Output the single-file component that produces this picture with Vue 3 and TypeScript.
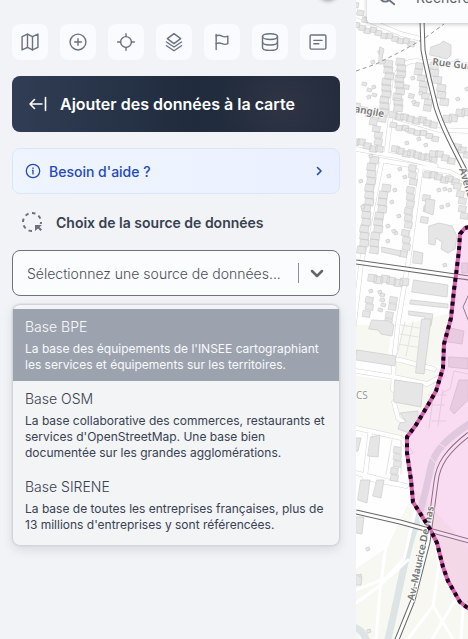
<script setup lang="ts">
import { ref } from 'vue'

interface Tool {
  label: string
  paths: string[]
}

interface Source {
  id: string
  name: string
  description: string
}

interface Row {
  from: [number, number]
  to: [number, number]
  size: number
  step: number
}

const tools: Tool[] = [
  { label: 'Carte', paths: ['M2.500 5.500 9 2.500l6 3 6.500-3v16l-6.500 3-6-3-6.500 3z', 'M9 2.500v16M15 5.500v16'] },
  { label: 'Ajouter', paths: ['M21.500 12a9.500 9.500 0 1 1-19 0 9.500 9.500 0 0 1 19 0z', 'M12 8v8M8 12h8'] },
  { label: 'Localiser', paths: ['M18.500 12a6.500 6.500 0 1 1-13 0 6.500 6.500 0 0 1 13 0z', 'M12 2v3.500M12 18.500V22M2 12h3.500M18.500 12H22'] },
  { label: 'Couches', paths: ['M12 2l8 6-8 6-8-6z', 'M3 12l9 6 9-6', 'M3 16.500l9 6 9-6'] },
  { label: 'Repères', paths: ['M5 21V3', 'M5 5c3-2 5-1 7 0s4 1.500 7 0v9c-3 1.500-5 1-7 0s-4-1.500-7 0'] },
  { label: 'Données', paths: ['M21 5.500c0 2-4 3.500-9 3.500S3 7.500 3 5.500 7 2 12 2s9 1.500 9 3.500z', 'M3 5.500v13C3 20.500 7 22 12 22s9-1.500 9-3.500v-13', 'M3 12c0 2 4 3.500 9 3.500s9-1.500 9-3.500'] },
  { label: 'Notes', paths: ['M4 3.500h16a1.500 1.500 0 0 1 1.500 1.500v14a1.500 1.500 0 0 1-1.500 1.500H4A1.500 1.500 0 0 1 2.500 19V5A1.500 1.500 0 0 1 4 3.500z', 'M7 10h10M7 14h6'] },
]

const sources: Source[] = [
  { id: 'bpe', name: 'Base BPE', description: "La base des équipements de l'INSEE cartographiant les services et équipements sur les territoires." },
  { id: 'osm', name: 'Base OSM', description: "La base collaborative des commerces, restaurants et services d'OpenStreetMap. Une base bien documentée sur les grandes agglomérations." },
  { id: 'sirene', name: 'Base SIRENE', description: 'La base de toutes les entreprises françaises, plus de 13 millions d\'entreprises y sont référencées.' },
]

const active = ref('bpe')
const query = ref('')
const search = ref('')

// Rows of houses that line the residential streets.
const rows: Row[] = [
  { from: [357, 26], to: [412, 44], size: 6, step: 6 },
  { from: [357, 5], to: [365, 20], size: 6, step: 7 },
  { from: [390, 64], to: [384, 112], size: 8, step: 6 },
  { from: [402, 62], to: [398, 108], size: 8, step: 6 },
  { from: [419, 66], to: [429, 108], size: 7, step: 6 },
  { from: [434, 66], to: [445, 102], size: 8, step: 7 },
  { from: [357, 107], to: [383, 119], size: 7, step: 7 },
  { from: [394, 115], to: [434, 124], size: 7, step: 6 },
  { from: [394, 125], to: [436, 138], size: 6, step: 6 },
  { from: [356, 141], to: [380, 150], size: 7, step: 6 },
  { from: [396, 150], to: [434, 159], size: 7, step: 6 },
  { from: [448, 119], to: [467, 112], size: 8, step: 7 },
  { from: [458, 146], to: [468, 155], size: 7, step: 7 },
  { from: [375, 122], to: [380, 142], size: 7, step: 6 },
  { from: [374, 160], to: [363, 250], size: 8, step: 7 },
  { from: [386, 188], to: [374, 250], size: 8, step: 7 },
  { from: [414, 168], to: [405, 254], size: 7, step: 7 },
  { from: [427, 198], to: [426, 220], size: 7, step: 12 },
  { from: [428, 174], to: [456, 182], size: 7, step: 6 },
  { from: [459, 186], to: [465, 216], size: 7, step: 7 },
  { from: [434, 153], to: [452, 160], size: 7, step: 7 },
  { from: [373, 278], to: [405, 283], size: 8, step: 7 },
  { from: [370, 300], to: [368, 314], size: 7, step: 7 },
  { from: [384, 295], to: [382, 310], size: 4, step: 6 },
  { from: [394, 300], to: [389, 322], size: 7, step: 7 },
  { from: [399, 450], to: [395, 478], size: 7, step: 7 },
  { from: [408, 87], to: [416, 104], size: 5, step: 8 },
  { from: [366, 84], to: [374, 95], size: 4, step: 7 },
]

function houses(row: Row): string {
  const dx = row.to[0] - row.from[0]
  const dy = row.to[1] - row.from[1]
  const length = Math.hypot(dx, dy)
  const count = Math.round(length / row.step)
  let path = ''
  for (let i = 0; i <= count; i++) {
    const wobble = ((i * 7 + row.from[0]) % 3) - 1
    const x = Math.round(row.from[0] + (dx * i) / count + (Math.abs(dy) > Math.abs(dx) ? wobble : 0))
    const y = Math.round(row.from[1] + (dy * i) / count + (Math.abs(dx) >= Math.abs(dy) ? wobble : 0))
    path += `M${x - row.size / 2} ${y - row.size / 2}l${row.size} 1l-1 ${row.size - 1}l-${row.size} -1z`
  }
  return path
}

// Garden sheds scattered inside the blocks.
const sheds: [number, number][] = [
  [372, 86], [378, 51], [371, 61], [411, 77], [419, 92], [412, 101], [387, 175], [393, 189],
  [398, 168], [397, 215], [390, 201], [386, 225], [394, 232], [403, 176], [437, 189], [443, 188],
  [448, 189], [440, 206], [446, 204], [369, 290], [378, 291], [405, 129], [417, 138], [424, 144],
  [405, 142], [369, 155], [361, 206], [359, 180], [456, 98], [465, 88], [455, 60], [367, 96],
  [366, 548], [358, 575], [367, 630], [443, 264], [392, 230], [386, 240],
]

const streets = 'M356 15l45 19 20 5M372 0l-3 20M386 155l9-72c1-14 7-21 20-22l53 4M388 115l51 15 29 1M356 149l40 7 40 10M382 160l-21 105-7 60M380 160l70 12 18 10M421 168l-13 95-10 60-4 37-1 30M358 353l42 7 34 9M356 371l38 6 33 7 15-8M394 402l4 16 9 7M356 428l45 10 9 14M370 434l-5 44 41 8M356 473l50 13'
const paths = 'M415 486l-29 60-6 44-4 49M356 590l30-12 18-19 13-55M356 603l22-16 30-27M434 530l5 34-6 42-25 33M454 602l-22 37M463 610l-2 29M433 606l20 33'
const roads = 'M422 20l1 30c4 22 9 40 13 57 7 22 18 42 34 73M356 262l50 7 63 9M356 512l44 10 69 19M469 434c-22 17-31 30-33 48l-8 60-15 58-17 42'
const zone = 'M469 227L465 228 460 234 459 250 456 275 454 290 451 318 444 344 443 368 436 391 428 405 416 425 407 437 407 453 411 480 413 502 430 529 437 543 443 567 448 581 460 602 469 609'
</script>

<template>
  <div class="app">
    <aside class="sidebar">
      <span class="collapse"></span>
      <nav class="tools" aria-label="Outils">
        <button v-for="tool in tools" :key="tool.label" class="tool" type="button" :aria-label="tool.label">
          <svg viewBox="0 0 24 24" aria-hidden="true">
            <path v-for="d in tool.paths" :key="d" :d="d" />
          </svg>
        </button>
      </nav>

      <button class="banner" type="button">
        <svg viewBox="0 0 20 20" aria-hidden="true"><path d="M14 10H2M6.500 5.500L2 10l4.500 4.500M17.500 3.500v13" /></svg>
        <span>Ajouter des données à la carte</span>
      </button>

      <button class="help" type="button">
        <svg viewBox="0 0 16 16" aria-hidden="true">
          <circle cx="8" cy="8" r="6.700" /><path d="M7.500 7.500H8V11M8 5v.5" />
        </svg>
        <span>Besoin d'aide ?</span>
        <svg class="chevron" viewBox="0 0 16 16" aria-hidden="true"><path d="M6.500 4.500L10 8l-3.500 3.500" /></svg>
      </button>

      <label class="heading" for="source">
        <svg viewBox="0 0 24 24" aria-hidden="true">
          <circle cx="12" cy="12" r="9" pathLength="80" stroke-dasharray="5 5" />
          <path class="patch" d="M14 14h9v9h-9z" />
          <path class="arrow" d="M15 15h7l-2.500 2 2.500 2.500-1.500 1.500-2.500-2.500-3 2.500z" />
        </svg>
        <span>Choix de la source de données</span>
      </label>

      <div class="combo">
        <div class="control">
          <input
            id="source"
            v-model="query"
            type="text"
            role="combobox"
            aria-expanded="true"
            aria-controls="sources"
            placeholder="Sélectionnez une source de données..."
          />
          <span class="divider"></span>
          <button class="toggle" type="button" aria-label="Ouvrir la liste">
            <svg viewBox="0 0 20 20" aria-hidden="true"><path d="M5 8l5 5 5-5" /></svg>
          </button>
        </div>
        <ul id="sources" class="menu" role="listbox">
          <li
            v-for="source in sources"
            :key="source.id"
            class="option"
            :class="{ active: source.id === active }"
            role="option"
            :aria-selected="source.id === active"
            @mouseenter="active = source.id"
          >
            <span class="name">{{ source.name }}</span>
            <span class="description">{{ source.description }}</span>
          </li>
        </ul>
      </div>
    </aside>

    <main class="map">
      <svg class="canvas" viewBox="356 0 112 639" preserveAspectRatio="xMinYMin slice" role="img" aria-label="Plan du quartier">
        <path class="ground" d="M356 0h112v639H356z" />
        <path class="park" d="M356 376l36 5 6-20 40 8 6-8v16l-28 48-12 14-48-9zM413 487l55 60v92H356v-70l32-22z" />
        <path class="park" d="M356 325h36l-4 30-32-5zM402 325l48-12-8 54-44-9z" />
        <g class="river">
          <path d="M469 424c-18 12-34 25-38 42-5 25-10 45-18 67-10 32-15 65-25 106" />
          <path d="M356 628c5 2 8 6 10 11" />
        </g>

        <path class="casing" :d="streets" />
        <path class="street" :d="streets" />
        <path class="footpath" :d="paths" />

        <g class="building">
          <path v-for="(row, i) in rows" :key="i" :d="houses(row)" />
          <path v-for="([x, y], i) in sheds" :key="`s${i}`" :d="`M${x} ${y}l3 -1 1 3 -3 1z`" />
          <path d="M431 47l9-3 3-3 8 4v10l-4 4-17-4zM380 47l4 2-2 10 4 2-2 3h-5zM429 226l10-3 13 3 5 10-2 13-7 4-7-4 1-7-6-4-1 7-6-1z" />
          <path d="M382 247l19 4-1 5-18-4zM414 251l9 2-1 11-9-1zM426 199l9 1-2 15-8-3zM414 280l34 5-1 12-35-5zM411 300l37 4v4l-38-4zM409 311l24 3-2 12-7-1 1-8-16-2z" />
          <path d="M372 320l17 1 5 4-2 11-11-2-3-4-9-1zM357 350l39 6-1 10-39-6zM422 319h9l-7 55-8-1zM395 380l28 4-2 23-27-5zM400 413l18-2v13l-6 10-14-5 2-6 6-1zM371 437l9-2-2 22-10-1zM356 438h5l-3 13h-2zM361 480h9l-3 23-9-3zM377 480h7l-3 18-8-2zM356 517h8l-2 17-6-1zM356 574l6 4-1 7h-5z" />
          <path d="M450 328l14 3-2 13-14-2zM449 357l19 1v11l-19-2zM468 380h-9l-9 29 4 5 14-14zM462 263h6v10h-6z" />
        </g>

        <path class="boundary" d="M356 71l20-7 24-12 25-14 19-14" />
        <path class="parcels" d="M428 395h18M426 405h18M432 421h14M443 390l-5 36M434 392l-5 36M401 440v34M392 440l-6 34M401 325l24 4M400 334l24 4M398 344l24 4M405 322l-8 33M413 322l-7 34M442 393l8-4 4-18 14 3" />
        <path class="trails" d="M415 495l10 50M468 490l-38 20M436 534l32-40M440 470l28 30M415 440l30 34M432 440l36 20" />

        <path class="road-edge" :d="roads" />
        <path class="road" :d="roads" />
        <path class="track" d="M469 294l-6 13 6 15" />

        <path class="zone" :d="`${zone}z`" />
        <path class="zone-line" :d="zone" />

        <g class="labels">
          <text transform="translate(432 65) rotate(7)">Rue Gui</text>
          <text transform="translate(354 112) rotate(10)">angile</text>
          <text transform="translate(459 169) rotate(73)">Avenue</text>
          <text class="place" x="356" y="399">CS</text>
          <text transform="translate(414 601) rotate(-78)">Av.-Maurice De mas</text>
        </g>

        <path class="zone-dots" :d="zone" />
      </svg>

      <label class="search">
        <svg viewBox="0 0 20 20" aria-hidden="true"><circle cx="8" cy="8" r="6" /><path d="M12 12l6 5" /></svg>
        <input v-model="search" type="search" aria-label="Rechercher" placeholder="Rechercher" />
      </label>
    </main>
  </div>
</template>

<style>
body {
  margin: 0;
  overflow: hidden;
}
</style>

<style scoped>
.app {
  display: grid;
  grid-template-columns: 356px 1fr;
  height: 100vh;
  overflow: hidden;
  background: #f2f3f7;
  color: #374151;
  font-family: Inter, "Liberation Sans", sans-serif;
  font-size: 14px;
}

svg {
  flex: none;
  fill: none;
  stroke: currentColor;
  stroke-linecap: round;
  stroke-linejoin: round;
}

button,
input {
  font: inherit;
}

.sidebar {
  position: relative;
  display: flex;
  flex-direction: column;
  padding: 24px 16px 0 12px;
}

.collapse {
  position: absolute;
  top: -20px;
  right: 18px;
  width: 20px;
  height: 20px;
  border-radius: 50%;
  background: #ffffff;
  box-shadow: 0 1px 4px #00000066;
}

.tools {
  display: flex;
  gap: 12px;
}

.tool {
  display: flex;
  align-items: center;
  justify-content: center;
  width: 36px;
  height: 36px;
  padding: 0;
  border: 0;
  border-radius: 8px;
  background: #fafbfe;
  color: #6b7280;
}

.tool svg {
  width: 20px;
  height: 20px;
  stroke-width: 1.7;
}

.banner {
  display: flex;
  align-items: center;
  gap: 12px;
  height: 56px;
  margin-top: 16px;
  padding: 0 16px;
  border: 0;
  border-radius: 8px;
  background:
    radial-gradient(circle at 82% 50%, #2f3444 0, #2f344400 22%),
    linear-gradient(90deg, #303d54, #202c3d 55%, #242d3e);
  color: #ffffff;
  font-size: 16px;
  font-weight: 600;
}

.banner svg {
  width: 20px;
  height: 20px;
  stroke-width: 1.6;
}

.help {
  display: flex;
  align-items: center;
  gap: 8px;
  height: 46px;
  margin-top: 16px;
  padding: 0 12px;
  border: 1px solid #d9e6fb;
  border-radius: 8px;
  background: linear-gradient(90deg, #eff5ff, #eaf0ff);
  color: #2549b8;
  font-weight: 500;
}

.help svg {
  width: 16px;
  height: 16px;
  stroke-width: 1.3;
}

.help .chevron {
  margin-left: auto;
  stroke-width: 1.6;
}

.heading {
  display: flex;
  align-items: center;
  gap: 12px;
  height: 24px;
  margin-top: 16px;
  padding-left: 8px;
  font-weight: 600;
}

.heading svg {
  width: 24px;
  height: 24px;
  color: #6b7080;
  stroke-width: 2;
  stroke-linecap: butt;
}

.heading .patch {
  fill: #f2f3f7;
  stroke: none;
}

.heading .arrow {
  fill: currentColor;
  stroke: none;
}

.combo {
  margin-top: 16px;
}

.control {
  display: flex;
  align-items: center;
  height: 44px;
  padding-left: 14px;
  border: 1px solid #6b7280;
  border-radius: 8px;
  background: #fafcfe;
}

.control input {
  flex: 1;
  min-width: 0;
  padding: 0;
  border: 0;
  outline: 0;
  background: transparent;
  font-weight: 300;
}

.control input::placeholder {
  color: #4b4f57;
  opacity: 1;
}

.divider {
  width: 1px;
  height: 20px;
  background: #8b8f96;
}

.toggle {
  display: flex;
  padding: 8px 12px 8px 8px;
  border: 0;
  background: transparent;
  color: #666666;
}

.toggle svg {
  width: 20px;
  height: 20px;
  stroke-width: 2.5;
}

.menu {
  margin: 8px 0 0;
  padding: 4px 0;
  border: 1px solid #d1d5db;
  border-radius: 8px;
  background: #f3f4f6;
  box-shadow: 0 0 0 1px #d1d5db66, 0 4px 11px #0000001a;
  list-style: none;
}

.option {
  padding: 8px 12px;
}

.option.active {
  background: #9ca3af;
  color: #f9fafb;
}

.name {
  display: block;
  line-height: 20px;
  font-weight: 300;
}

.description {
  display: block;
  margin-top: 4px;
  font-size: 12px;
  line-height: 16px;
}

.map {
  position: relative;
  overflow: hidden;
}

.canvas {
  display: block;
  width: 100%;
  height: 100%;
}

.ground {
  fill: #fefefe;
  stroke: none;
}

.park {
  fill: #f6f8f1;
  stroke: none;
}

.river {
  stroke: #dce4e5;
  stroke-width: 7;
}

.building {
  fill: #e6e6e6;
  stroke: #cccccc;
  stroke-width: 0.7;
}

.casing {
  stroke: #d6d6d6;
  stroke-width: 5;
}

.street {
  stroke: #ffffff;
  stroke-width: 4;
}

.footpath {
  stroke: #ffffff;
  stroke-width: 3;
}

.boundary {
  stroke: #999999;
  stroke-dasharray: 4 3;
  stroke-linecap: butt;
}

.parcels {
  stroke: #e4e4e4;
}

.trails {
  stroke: #ffffff;
}

.road-edge {
  stroke: #666666;
  stroke-width: 5;
  stroke-linecap: butt;
}

.road {
  stroke: #ffffff;
  stroke-width: 3;
  stroke-linecap: butt;
}

.track {
  stroke: #777777;
}

.labels {
  fill: #777777;
  stroke: #ffffffaa;
  stroke-width: 2;
  paint-order: stroke;
  font-family: "Noto Sans", sans-serif;
  font-size: 10px;
  font-weight: 600;
}

.labels .place {
  fill: #999999;
  font-weight: 400;
}

.zone {
  fill: #ec84d2;
  fill-opacity: 0.28;
  stroke: none;
}

.zone-line {
  stroke: #d463ad;
  stroke-width: 4;
}

.zone-dots {
  stroke: #210019;
  stroke-width: 4;
  stroke-dasharray: 4 4;
  stroke-linecap: butt;
}

.search {
  position: absolute;
  top: -28px;
  left: 11px;
  display: flex;
  align-items: center;
  gap: 20px;
  width: 300px;
  height: 51px;
  padding-left: 11px;
  border-radius: 4px;
  background: #fafcfe;
  color: #6b7280;
  box-shadow: 0 1px 4px #00000040;
}

.search svg {
  width: 18px;
  height: 18px;
  stroke-width: 2;
}

.search input {
  width: 200px;
  padding: 0;
  border: 0;
  outline: 0;
  background: transparent;
}

.search input::placeholder {
  color: #5f636b;
  opacity: 1;
}
</style>
